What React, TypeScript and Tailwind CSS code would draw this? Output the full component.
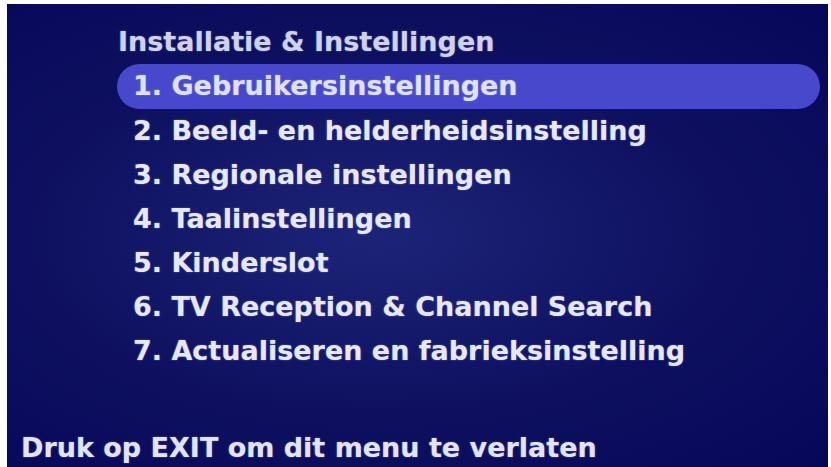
import React from 'react';

const items = [
  '1. Gebruikersinstellingen',
  '2. Beeld- en helderheidsinstelling',
  '3. Regionale instellingen',
  '4. Taalinstellingen',
  '5. Kinderslot',
  '6. TV Reception & Channel Search',
  '7. Actualiseren en fabrieksinstelling',
];

export default function App() {
  const selected = 0;

  return (
    <div className="w-[831px] h-[467px] bg-white pt-[4px] pl-[7px] pr-[3px] overflow-hidden">
      <div
        className="h-full flex flex-col bg-[radial-gradient(ellipse_at_45%_50%,#1d2478_0%,#0e105f_55%,#07075a_100%)] font-['DejaVu_Sans',sans-serif] font-bold text-[27px] [text-shadow:0_0_2px_rgba(200,205,255,0.45)]"
      >
        {/* menu */}
        <div className="mt-[16px] ml-[110px] mr-[8px] flex flex-col">
          <div className="h-[44px] leading-[44px] pl-[1px] text-[#cfd2ea] whitespace-nowrap">
            Installatie &amp; Instellingen
          </div>
          {items.map((label, i) => (
            <div
              key={label}
              className={
                i === selected
                  ? 'h-[45px] leading-[44px] pl-[16px] rounded-full bg-[#4848cc] text-[#dfe2f6] whitespace-nowrap'
                  : 'h-[44px] leading-[44px] pl-[16px] text-[#e6e8f8] whitespace-nowrap'
              }
            >
              {label}
            </div>
          ))}
        </div>

        {/* hint */}
        <div className="mt-auto pb-[3px] pl-[14px] leading-[32px] text-[#e2e4f6] whitespace-nowrap">
          Druk op EXIT om dit menu te verlaten
        </div>
      </div>
    </div>
  );
}
